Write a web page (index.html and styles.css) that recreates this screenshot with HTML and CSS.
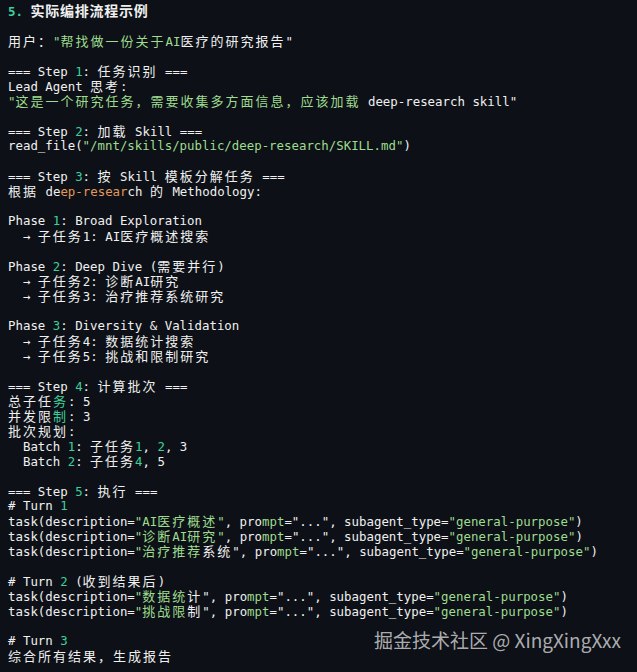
FILE: index.html
```html
<!DOCTYPE html>
<html lang="zh-CN">
<head>
<meta charset="utf-8">
<title>实际编排流程示例</title>
<link rel="stylesheet" href="styles.css">
</head>
<body>
<div class="page">
<div class="code">
<div class="ln t"><span class="n">5.</span> <span class="zt">实际编排流程示例</span></div>
<div class="ln"></div>
<div class="ln"><span class="z">用户：</span><span class="s">"<span class="z">帮找做一份关于</span>AI</span><span class="z">医疗的研究报告</span>"</div>
<div class="ln"></div>
<div class="ln">=== Step <span class="n">1</span>: <span class="z">任务识别</span> ===</div>
<div class="ln">Lead Agent <span class="z">思考</span>:</div>
<div class="ln"><span class="s">"<span class="z">这是一个研究任务，需要收集多方面信息，应该加载</span></span> deep-research skill"</div>
<div class="ln"></div>
<div class="ln">=== Step <span class="n">2</span>: <span class="z">加载</span> Skill ===</div>
<div class="ln">read_file(<span class="s">"/mnt/skills/public/deep-research/SKILL.md"</span>)</div>
<div class="ln"></div>
<div class="ln">=== Step <span class="n">3</span>: <span class="z">按</span> Skill <span class="z">模板分解任务</span> ===</div>
<div class="ln"><span class="z">根据</span> de<span class="o">ep-resear</span>ch <span class="z">的</span> Methodology:</div>
<div class="ln"></div>
<div class="ln">Phase <span class="n">1</span>: Broad Exploration</div>
<div class="ln">  → <span class="z">子任务</span>1: AI<span class="z">医疗概述搜索</span></div>
<div class="ln"></div>
<div class="ln">Phase <span class="n">2</span>: Deep Dive (<span class="z">需要并行</span>)</div>
<div class="ln">  → <span class="z">子任务</span>2: <span class="z">诊断</span>AI<span class="z">研究</span></div>
<div class="ln">  → <span class="z">子任务</span>3: <span class="z">治疗推荐系统研究</span></div>
<div class="ln"></div>
<div class="ln">Phase <span class="n">3</span>: Diversity &amp; Validation</div>
<div class="ln">  → <span class="z">子任务</span>4: <span class="z">数据统计搜索</span></div>
<div class="ln">  → <span class="z">子任务</span>5: <span class="z">挑战和限制研究</span></div>
<div class="ln"></div>
<div class="ln">=== Step <span class="n">4</span>: <span class="z">计算批次</span> ===</div>
<div class="ln"><span class="z">总子任<span class="n">务</span></span>: 5</div>
<div class="ln"><span class="z">并发限<span class="n">制</span></span>: 3</div>
<div class="ln"><span class="z">批次规划</span>:</div>
<div class="ln">  Batch <span class="n">1</span>: <span class="z">子任务</span><span class="n">1</span>, <span class="n">2</span>, 3</div>
<div class="ln">  Batch <span class="n">2</span>: <span class="z">子任务</span><span class="n">4</span>, 5</div>
<div class="ln"></div>
<div class="ln">=== Step <span class="n">5</span>: <span class="z">执行</span> ===</div>
<div class="ln"># Turn <span class="n">1</span></div>
<div class="ln">task(description=<span class="s">"AI<span class="z">医疗概述</span>"</span>, pro<span class="s">mpt</span>="...", subagent_type=<span class="s">"general-purpose"</span>)</div>
<div class="ln">task(description=<span class="s">"<span class="z">诊断</span>AI<span class="z">研究</span>"</span>, pro<span class="s">mpt</span>="...", subagent_type=<span class="s">"general-purpose"</span>)</div>
<div class="ln">task(description=<span class="s">"<span class="z">治疗推荐</span></span><span class="z">系统</span>", pro<span class="s">mpt</span>="...", subagent_type=<span class="s">"general-purpose"</span>)</div>
<div class="ln"></div>
<div class="ln"># Turn <span class="n">2</span> (<span class="z">收到结果后</span>)</div>
<div class="ln">task(description=<span class="s">"<span class="z">数据统</span></span><span class="z">计</span>", pro<span class="s">mpt</span>="...", subagent_type=<span class="s">"general-purpose"</span>)</div>
<div class="ln">task(description=<span class="s">"<span class="z">挑战限</span></span><span class="z">制</span>", pro<span class="s">mpt</span>="...", subagent_type=<span class="s">"general-purpose"</span>)</div>
<div class="ln"></div>
<div class="ln"># Turn <span class="n">3</span></div>
<div class="ln"><span class="z">综合所有结果，生成报告</span></div>
</div>
<div class="wm">掘金技术社区 @ XingXingXxx</div>
</div>
</body>
</html>
```

FILE: styles.css
```css
html, body {
  margin: 0;
  padding: 0;
  background: #0d1117;
}

.page {
  position: relative;
  width: 637px;
  height: 672px;
  overflow: hidden;
  background: #0d1117;
}

.code {
  display: flex;
  flex-direction: column;
  padding: 3px 8px 0 8px;
  font-family: "DejaVu Sans Mono", monospace;
  font-size: 12.4px;
  color: #f0f0f0;
}

.ln {
  height: 15px;
  line-height: 15px;
  white-space: pre;
}

.t {
  font-weight: bold;
}

.z {
  font-family: "Noto Sans CJK SC", sans-serif;
  font-size: 13px;
  letter-spacing: 2px;
}

.zt {
  font-family: "Noto Sans CJK SC", sans-serif;
  font-size: 14px;
  font-weight: bold;
  letter-spacing: 0.75px;
}

.n {
  color: #3dd09c;
}

.s {
  color: #9fdc8f;
}

.o {
  color: #e2985a;
}

.wm {
  position: absolute;
  right: 16px;
  top: 627px;
  font-family: "Noto Sans CJK SC", "Noto Sans", sans-serif;
  font-size: 19px;
  line-height: 26px;
  color: rgba(215, 215, 215, 0.8);
  white-space: nowrap;
}
```
